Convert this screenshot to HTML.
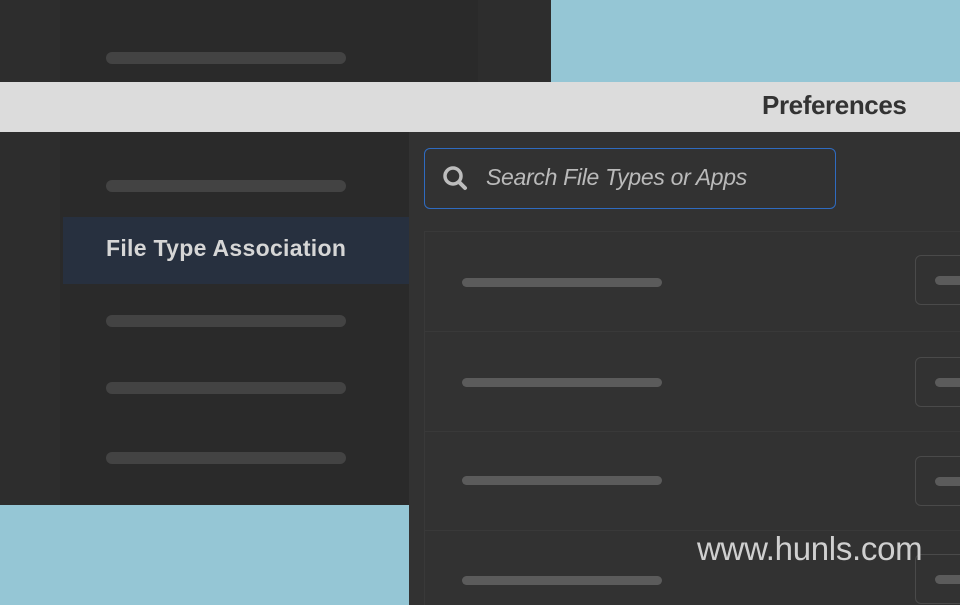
<!DOCTYPE html>
<html><head><meta charset="utf-8"><style>
*{margin:0;padding:0;box-sizing:border-box}
html,body{width:960px;height:605px;overflow:hidden}
body{position:relative;background:#2d2d2d;font-family:"Liberation Sans",sans-serif}
.a{position:absolute}
.bar{position:absolute;height:12px;border-radius:6px;background:#434343}
.rb{position:absolute;height:9px;border-radius:5px;background:#5b5b5b;left:462px;width:200px}
.row{position:absolute;left:424px;width:540px;height:100px;border-top:1px solid #393939;border-left:1px solid #393939}
.btn{position:absolute;left:915px;width:60px;height:50px;border:1px solid #4a4a4a;border-radius:6px}
.btn i{position:absolute;left:19px;top:20px;width:40px;height:9px;border-radius:5px;background:#5b5b5b}
</style></head><body>
<div class="a" style="left:60px;top:0;width:418px;height:82px;background:#2a2a2a"></div>
<div class="a" style="left:551px;top:0;width:409px;height:82px;background:#95c6d5"></div>
<div class="bar" style="left:106px;top:52px;width:240px"></div>
<div class="a" style="left:0;top:82px;width:960px;height:50px;background:#dcdcdc"></div>
<div class="a" style="left:762px;top:90px;font-size:26px;font-weight:bold;color:#333;letter-spacing:-0.4px">Preferences</div>
<div class="a" style="left:60px;top:132px;width:349px;height:373px;background:#2a2a2a"></div>
<div class="a" style="left:0;top:505px;width:409px;height:100px;background:#95c6d5"></div>
<div class="a" style="left:409px;top:132px;width:551px;height:473px;background:#323232"></div>
<div class="bar" style="left:106px;top:180px;width:240px"></div>
<div class="a" style="left:63px;top:217px;width:346px;height:67px;background:#27303f"></div>
<div class="a" style="left:106px;top:235px;font-size:23px;font-weight:bold;color:#d6d6d6;letter-spacing:0.3px">File Type Association</div>
<div class="bar" style="left:106px;top:315px;width:240px"></div>
<div class="bar" style="left:106px;top:382px;width:240px"></div>
<div class="bar" style="left:106px;top:452px;width:240px"></div>
<div class="a" style="left:424px;top:148px;width:412px;height:61px;border:1.5px solid #2f6bc0;border-radius:6px"></div>
<svg class="a" style="left:441px;top:164px" width="28" height="28" viewBox="0 0 28 28"><circle cx="12" cy="12" r="8" fill="none" stroke="#bdbdbd" stroke-width="3.5"/><line x1="18" y1="18" x2="24" y2="24" stroke="#bdbdbd" stroke-width="4" stroke-linecap="round"/></svg>
<div class="a" style="left:486px;top:164px;font-size:23px;font-style:italic;color:#bababa;letter-spacing:-0.3px">Search File Types or Apps</div>
<div class="row" style="top:231px"></div>
<div class="row" style="top:331px"></div>
<div class="row" style="top:431px"></div>
<div class="row" style="top:530px;height:75px"></div>
<div class="rb" style="top:278px"></div>
<div class="rb" style="top:378px"></div>
<div class="rb" style="top:476px"></div>
<div class="rb" style="top:576px"></div>
<div class="btn" style="top:255px"><i></i></div>
<div class="btn" style="top:357px"><i></i></div>
<div class="btn" style="top:456px"><i></i></div>
<div class="btn" style="top:554px"><i></i></div>
<div class="a" style="left:697px;top:530px;font-size:33px;color:#cfcfcf;letter-spacing:-0.3px">www.hunls.com</div>
</body></html>
